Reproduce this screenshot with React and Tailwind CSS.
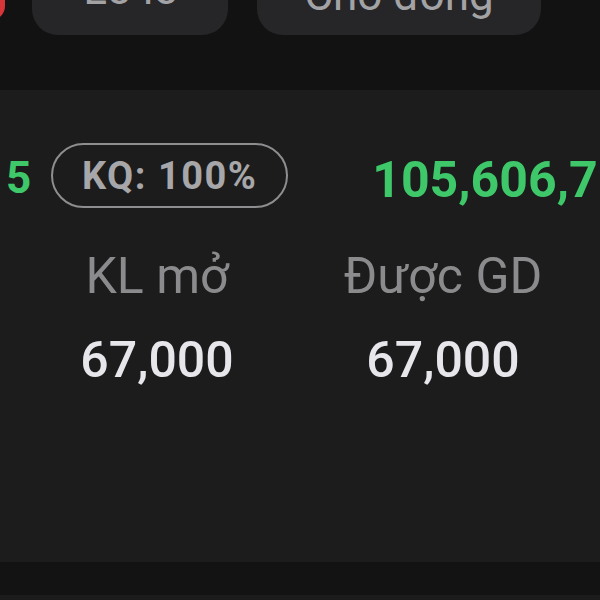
export default function App() {
  return (
    <div className="relative w-[600px] h-[600px] overflow-hidden bg-[#121212] font-['Roboto','Liberation_Sans',sans-serif]">
      {/* tabs, cut off at the top */}
      <div className="relative h-[90px] flex">
        <div className="absolute -left-[23px] -top-[18px] w-[28px] h-[38px] rounded-full bg-[#d8353b]" />
        <div className="ml-[32px] -mt-[35px] w-[196px] h-[70px] rounded-[26px] bg-[#262628] flex items-center justify-center pb-[22px] text-[44px] leading-none text-[#a3a3a6]">
          Lô lẻ
        </div>
        <div className="ml-[29px] -mt-[35px] w-[284px] h-[70px] rounded-[26px] bg-[#262628] flex items-center justify-center pb-[10px] text-[44px] leading-none text-[#a3a3a6]">
          Chờ đóng
        </div>
      </div>

      {/* order panel */}
      <div className="h-[472px] bg-[#1c1c1d] pt-[53px]">
        <div className="flex items-center h-[65px] whitespace-nowrap">
          <span className="ml-[6px] mt-[5px] text-[44px] leading-[60px] font-bold text-[#3ec86a]">5</span>
          <div className="ml-[20px] shrink-0 w-[237px] h-[65px] rounded-full border-[2.5px] border-[#8e8e90] flex items-center justify-center text-[38px] leading-none font-bold tracking-[1.5px] text-[#a7a7aa]">
            KQ: 100%
          </div>
          <span className="ml-[84px] mt-[9px] text-[50px] leading-[60px] font-bold text-[#3ec86a]">105,606,780</span>
        </div>

        <div className="mt-[38px] px-[14px] grid grid-cols-2 w-[600px]">
          <div className="text-center text-[50px] leading-[60px] text-[#8b8b8d]">KL mở</div>
          <div className="text-center text-[50px] leading-[60px] text-[#8b8b8d]">Được GD</div>
          <div className="mt-[24px] text-center text-[50px] leading-[60px] font-medium text-[#e7e7eb]">67,000</div>
          <div className="mt-[24px] text-center text-[50px] leading-[60px] font-medium text-[#e7e7eb]">67,000</div>
        </div>
      </div>

      <div className="h-[33px] bg-[#131313]" />
      <div className="h-[40px] bg-[#1c1c1d]" />
    </div>
  );
}
